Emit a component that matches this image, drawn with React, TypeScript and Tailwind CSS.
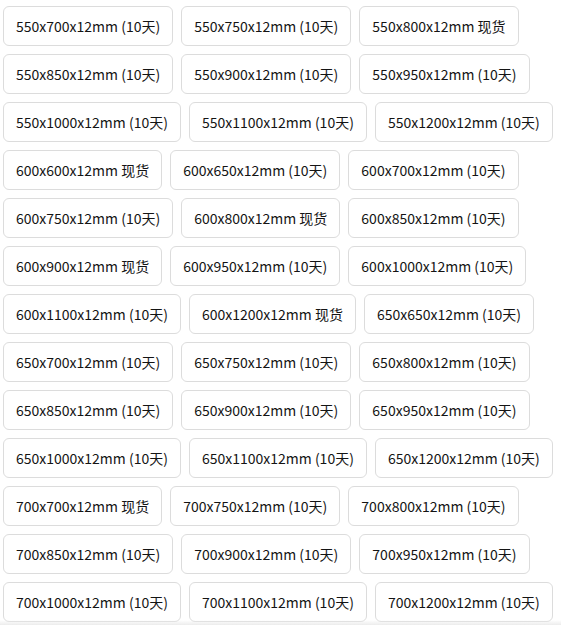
const sizes = [
  '550x700x12mm (10天)', '550x750x12mm (10天)', '550x800x12mm 现货',
  '550x850x12mm (10天)', '550x900x12mm (10天)', '550x950x12mm (10天)',
  '550x1000x12mm (10天)', '550x1100x12mm (10天)', '550x1200x12mm (10天)',
  '600x600x12mm 现货', '600x650x12mm (10天)', '600x700x12mm (10天)',
  '600x750x12mm (10天)', '600x800x12mm 现货', '600x850x12mm (10天)',
  '600x900x12mm 现货', '600x950x12mm (10天)', '600x1000x12mm (10天)',
  '600x1100x12mm (10天)', '600x1200x12mm 现货', '650x650x12mm (10天)',
  '650x700x12mm (10天)', '650x750x12mm (10天)', '650x800x12mm (10天)',
  '650x850x12mm (10天)', '650x900x12mm (10天)', '650x950x12mm (10天)',
  '650x1000x12mm (10天)', '650x1100x12mm (10天)', '650x1200x12mm (10天)',
  '700x700x12mm 现货', '700x750x12mm (10天)', '700x800x12mm (10天)',
  '700x850x12mm (10天)', '700x900x12mm (10天)', '700x950x12mm (10天)',
  '700x1000x12mm (10天)', '700x1100x12mm (10天)', '700x1200x12mm (10天)',
]

const rows: string[][] = []
for (let i = 0; i < sizes.length; i += 3) rows.push(sizes.slice(i, i + 3))

export default function App() {
  return (
    <div className="relative h-[625px] overflow-hidden bg-white font-['Noto_Sans_CJK_SC',sans-serif]">
      <div className="flex flex-col gap-2 pl-[3px] pt-[6px]">
        {rows.map((row, i) => (
          <div key={i} className="flex gap-2">
            {row.map((s) => (
              <button
                key={s}
                className="h-10 shrink-0 whitespace-nowrap rounded-md border border-[#dcdcdc] bg-white px-3 text-[14px] text-[#141414]"
              >
                {s}
              </button>
            ))}
          </div>
        ))}
      </div>
      <div className="absolute inset-x-0 bottom-0 h-[5px] bg-gradient-to-b from-transparent to-[#ececec]" />
    </div>
  )
}
